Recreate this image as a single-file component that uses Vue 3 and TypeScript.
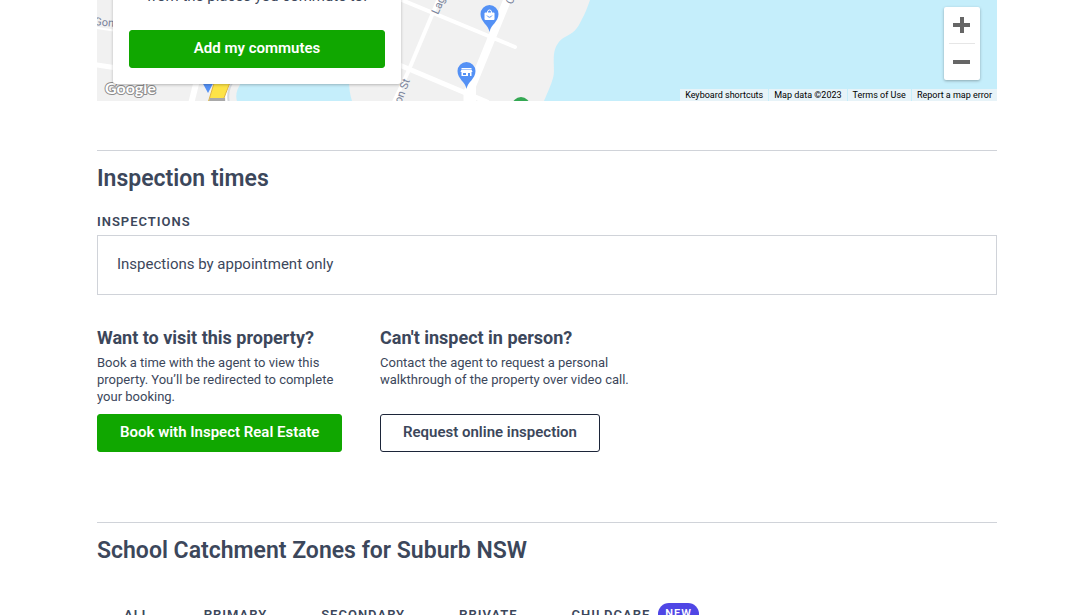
<script setup lang="ts">
interface Option {
  title: string
  text: string
  action: string
  primary: boolean
}

interface Tab {
  label: string
  badge?: string
}

const options: Option[] = [
  {
    title: 'Want to visit this property?',
    text: 'Book a time with the agent to view this property. You’ll be redirected to complete your booking.',
    action: 'Book with Inspect Real Estate',
    primary: true,
  },
  {
    title: "Can't inspect in person?",
    text: 'Contact the agent to request a personal walkthrough of the property over video call.',
    action: 'Request online inspection',
    primary: false,
  },
]

const tabs: Tab[] = [
  { label: 'All' },
  { label: 'Primary' },
  { label: 'Secondary' },
  { label: 'Private' },
  { label: 'Childcare', badge: 'New' },
]
</script>

<template>
  <main class="page">
    <section class="map" aria-label="Map">
      <svg class="map-art" width="900" height="101" viewBox="0 0 900 101" aria-hidden="true">
        <path d="M0 0H493C490 8 488 14 485 19C480 30 476 33 468 37C461 41 458 47 457 54C456 64 458 72 456 78C454 86 450 93 447 101H0Z" fill="#f1f1f1" />
        <path d="M146 80H252Q252 92 255 101H140Q137 92 146 80Z" fill="#c5eefb" />
        <g fill="none" stroke="#fff" stroke-linecap="round">
          <path d="M0 28L20 31" stroke-width="2" />
          <path d="M0 65L20 68" stroke-width="5" />
          <path d="M100 80L94 104" stroke-width="6" />
          <path d="M300 -2L418 47" stroke-width="4" />
          <path d="M300 64L390 102" stroke-width="5" />
          <path d="M343 -4L311 72L296 104" stroke-width="4" />
          <path d="M411 -2L375 86V106" stroke-width="8" />
          <path d="M372 92V106" stroke-width="11" />
          <path d="M136 80Q128 90 131 103" stroke="#d5d9df" stroke-width="4" />
          <path d="M135 80Q127 90 130 103" stroke-width="2" />
        </g>
        <path d="M118 80H134L125 103H111Z" fill="#fde347" stroke="#dfb443" />
        <path d="M113 98H128V101H112Z" fill="#a9a9a9" />
        <path d="M104 80H118L111 93Z" fill="#5491f5" />
        <g fill="#78829a" font-family="Roboto, sans-serif" font-size="11">
          <text transform="translate(-3 25) rotate(5)">Gong</text>
          <text transform="translate(341 15) rotate(-66)">Lagoon</text>
          <text transform="translate(304 104) rotate(-69)">on St</text>
          <text transform="translate(415 5) rotate(-66)">C</text>
        </g>
        <g>
          <path d="M392.500 32C391.500 25 383.500 22 383.500 14A9 9 0 0 1 401.500 14C401.500 22 393.500 25 392.500 32Z" fill="#5491f5" />
          <rect x="387.500" y="12.500" width="10" height="7.500" rx="1" fill="#fff" />
          <path d="M390.500 13V12A2 2 0 0 1 394.500 12V13" fill="none" stroke="#fff" />
          <path d="M390 15.500Q392.500 19 395 15.500" fill="none" stroke="#5491f5" />
        </g>
        <g>
          <path d="M369.500 89C368.500 82 360.500 79 360.500 71A9 9 0 0 1 378.500 71C378.500 79 370.500 82 369.500 89Z" fill="#5491f5" />
          <path d="M364.500 68.500H374.500" stroke="#fff" />
          <path d="M364.500 69.500H374.500L375.500 72H363.500Z M364.500 72H374.500V76H373V73H371V76H364.500Z" fill="#fff" />
          <path d="M366 73H369V75H366Z" fill="#5491f5" />
        </g>
        <circle cx="424" cy="106" r="9" fill="#34a853" />
        <text x="8" y="94" fill="#fff" stroke="#8c8c8c" stroke-width="2" stroke-linejoin="round" paint-order="stroke" font-family="Lato, sans-serif" font-size="16" font-weight="700">Google</text>
      </svg>

      <div class="commute-card">
        <p class="commute-text">from the places you commute to.</p>
        <button class="button primary wide" type="button">Add my commutes</button>
      </div>

      <div class="zoom-controls">
        <button type="button" aria-label="Zoom in">
          <svg width="18" height="18" viewBox="0 0 18 18"><path d="M7 1h4v6h6v4h-6v6H7v-6H0V7h7z" fill="#666" /></svg>
        </button>
        <button type="button" aria-label="Zoom out">
          <svg width="18" height="18" viewBox="0 0 18 18"><path d="M0 7h17v4H0z" fill="#666" /></svg>
        </button>
      </div>

      <div class="map-links">
        <button type="button">Keyboard shortcuts</button>
        <span>Map data ©2023</span>
        <a href="#terms">Terms of Use</a>
        <a href="#report">Report a map error</a>
      </div>
    </section>

    <section class="section inspections">
      <h2>Inspection times</h2>
      <h3 class="label">Inspections</h3>
      <p class="notice">Inspections by appointment only</p>
      <div class="options">
        <article v-for="option in options" :key="option.title" class="option">
          <h3>{{ option.title }}</h3>
          <p>{{ option.text }}</p>
          <button class="button" :class="option.primary ? 'primary' : 'outline'" type="button">{{ option.action }}</button>
        </article>
      </div>
    </section>

    <section class="section">
      <h2>School Catchment Zones for Suburb NSW</h2>
      <div class="tabs" role="tablist">
        <button v-for="tab in tabs" :key="tab.label" class="tab" type="button" role="tab">
          {{ tab.label }}<span v-if="tab.badge" class="badge">{{ tab.badge }}</span>
        </button>
      </div>
    </section>
  </main>
</template>

<style>
body {
  margin: 0;
  background: #fff;
}
</style>

<style scoped>
.page {
  box-sizing: border-box;
  height: 100vh;
  overflow: hidden;
  padding: 0 80px 0 97px;
  color: #3c475b;
  font-family: Roboto, "Liberation Sans", sans-serif;
}

h2, h3, p {
  margin: 0;
}

button {
  font-family: inherit;
  cursor: pointer;
}

.map {
  position: relative;
  height: 101px;
  overflow: hidden;
  background: #c5eefb;
}

.map-art {
  position: absolute;
  left: 0;
  top: 0;
}

.commute-card {
  position: absolute;
  left: 16px;
  bottom: 17px;
  box-sizing: border-box;
  width: 288px;
  padding: 16px;
  border-radius: 3px;
  background: #fff;
  box-shadow: 0 1px 3px rgba(0, 0, 0, 0.25);
}

.commute-text {
  margin-bottom: 22px;
  font-size: 15px;
  line-height: 24px;
  text-align: center;
}

.button {
  height: 38px;
  padding: 0 22px 2px;
  border: 1px solid #10a700;
  border-radius: 3px;
  font-size: 15px;
  font-weight: 600;
}

.primary {
  background: #10a700;
  color: #fff;
}

.outline {
  border-color: #1c2539;
  background: #fff;
  color: #3c475b;
}

.wide {
  display: block;
  width: 100%;
}

.zoom-controls {
  position: absolute;
  top: 7px;
  right: 17px;
  width: 36px;
  border-radius: 2px;
  background: #fff;
  box-shadow: 0 1px 3px rgba(0, 0, 0, 0.3);
}

.zoom-controls button {
  display: flex;
  align-items: center;
  justify-content: center;
  width: 26px;
  height: 36px;
  margin: 0 5px;
  padding: 0;
  border: 0;
  background: none;
}

.zoom-controls button + button {
  height: 37px;
  border-top: 1px solid #e6e6e6;
}

.map-links {
  position: absolute;
  right: 0;
  bottom: 0;
  display: flex;
  gap: 1px;
}

.map-links > * {
  padding: 0 5px;
  border: 0;
  background: #e7f3f8;
  color: #000;
  font-size: 9px;
  line-height: 12px;
  text-decoration: none;
}

.section {
  margin-top: 49px;
  border-top: 1px solid #d0d3d9;
}

h2 {
  padding-top: 12px;
  font-size: 23px;
  font-weight: 600;
  line-height: 32px;
}

.label {
  margin-top: 18px;
  font-size: 13px;
  font-weight: 600;
  line-height: 18px;
  letter-spacing: 1px;
  text-transform: uppercase;
}

.notice {
  margin-top: 4px;
  padding: 16px 19px 18px;
  border: 1px solid #d0d3d9;
  font-size: 15px;
  line-height: 24px;
}

.options {
  display: flex;
  margin-top: 31px;
}

.option {
  box-sizing: border-box;
  display: flex;
  flex-direction: column;
  align-items: flex-start;
  width: 283px;
  padding-right: 28px;
}

.option h3 {
  font-size: 18px;
  font-weight: 700;
  line-height: 24px;
  white-space: nowrap;
}

.option p {
  margin: 4px 0 9px;
  font-size: 13px;
  line-height: 17px;
}

.option .button {
  margin-top: auto;
  white-space: nowrap;
}

.inspections + .section {
  margin-top: 70px;
}

.tabs {
  display: flex;
  gap: 54px;
  margin-top: 35px;
  padding-left: 27px;
}

.tab {
  display: flex;
  align-items: center;
  gap: 8px;
  height: 24px;
  padding: 0;
  border: 0;
  background: none;
  color: #3c475b;
  font-size: 13px;
  font-weight: 600;
  letter-spacing: 1px;
  text-transform: uppercase;
}

.badge {
  padding: 0 7px;
  border-radius: 11px;
  background: #4f46e5;
  color: #fff;
  font-size: 11px;
  line-height: 22px;
}
</style>
